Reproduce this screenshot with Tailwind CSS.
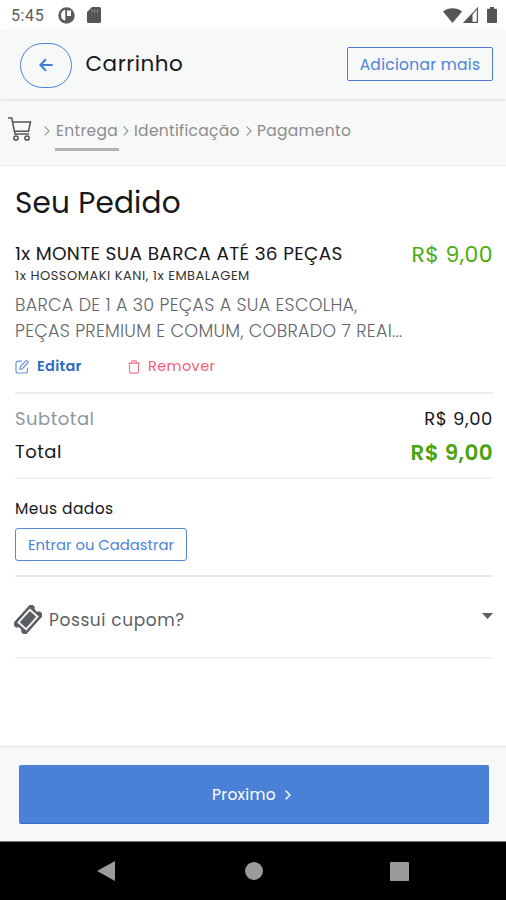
<!DOCTYPE html>
<html lang="pt-BR">
<head>
<meta charset="utf-8">
<meta name="viewport" content="width=device-width, initial-scale=1">
<title>Carrinho</title>
<script src="https://cdn.jsdelivr.net/npm/@tailwindcss/browser@4"></script>
</head>
<body class="bg-white">
<div class="flex h-[900px] w-[506px] flex-col overflow-hidden bg-white font-[Poppins,Inter,sans-serif] text-[#16181b] whitespace-nowrap">

  <!-- Status bar -->
  <div class="flex h-[30px] shrink-0 items-center pl-[11px] pr-[8px] text-[#5c5c5c]">
    <span class="w-[47px] font-[Roboto,sans-serif] text-[16px] leading-[30px] tracking-[0.600px]"><span class="relative top-px">5:45</span></span>
    <svg class="h-[17px] w-[17px]" viewBox="0 0 17 17"><circle cx="8.500" cy="8.500" r="8.200" fill="#5c5c5c"/><path d="M7.300 3v10.500C4.500 13.500 3 11.300 3 8.500S4.500 3 7.300 3zM9 3.500h4v5.600H9z" fill="#fff"/></svg>
    <svg class="ml-[12px] h-[16px] w-[14px]" viewBox="0 0 14 16"><path d="M5 0h7.500A1.500 1.500 0 0 1 14 1.500v13a1.500 1.500 0 0 1-1.500 1.500h-11A1.500 1.500 0 0 1 0 14.500V5z" fill="#555"/><path d="M5 2.500v3M7.700 2.500v3M10.400 2.500v3" stroke="#999" stroke-width="1"/></svg>
    <div class="ml-auto flex items-center">
      <svg class="h-[15px] w-[19px]" viewBox="0 0 19 15"><path d="M0 3.400C5.500-.9 13.500-.9 19 3.400L9.500 15z" fill="#555"/></svg>
      <svg class="ml-[1px] h-[16px] w-[15px]" viewBox="0 0 15 16"><path d="M14.400 1.400V15.400H1.300z" fill="none" stroke="#555" stroke-width="1.200"/><path d="M9.500 6.500V16H0z" fill="#555"/></svg>
      <svg class="ml-[9px] mr-px h-[16px] w-[10px]" viewBox="0 0 10 16"><path d="M3 0h4v1.700h2.200q.8 0 .8.800v12.700q0 .8-.8.800H.8q-.8 0-.8-.8V2.500q0-.8.800-.8H3z" fill="#555"/></svg>
    </div>
  </div>

  <!-- Header -->
  <header class="z-10 flex h-[69px] shrink-0 items-center bg-[#f7f8f8] pl-5 pr-[13px] pb-[1px] shadow-[0_1px_3px_rgba(0,0,0,0.12)]">
    <button class="mt-[2px] flex h-[45px] w-[52px] items-center justify-center rounded-full border border-[#4b82dc]">
      <svg class="h-[14px] w-[14px]" viewBox="0 0 14 14" fill="none" stroke="#3f7cdb" stroke-width="2"><path d="M13.700 7H1.500M7 1.200 1.300 7 7 12.800"/></svg>
    </button>
    <h1 class="ml-[13.500px] text-[21.500px] leading-[30px] tracking-[0.500px]">Carrinho</h1>
    <button class="ml-auto h-[34px] w-[146px] rounded-[2px] border border-[#4b7bd0] pt-px text-[15.500px] tracking-[0.300px] text-[#4b82dc]">Adicionar mais</button>
  </header>

  <!-- Steps -->
  <nav class="flex h-[67px] shrink-0 items-center border-b border-[#e9ecec] bg-[#f7f8f8] pb-[3px] pl-2 text-[15.500px] text-[#8d8d8d]">
    <svg class="-mt-[4px] h-[24px] w-[24px]" viewBox="0 0 24 24" fill="none" stroke="#555" stroke-width="1.500"><path d="M0 1h3.700l3.300 16h14.200M4.700 5h17.800l-2 9.200H6.300"/><circle cx="8" cy="21" r="2.100"/><circle cx="19" cy="21" r="2.100"/></svg>
    <svg class="ml-[12px] h-[10px] w-[6px]" viewBox="0 0 6 10" fill="none" stroke="#999" stroke-width="1.200"><path d="m.7.700 4.300 4.300-4.300 4.300"/></svg>
    <span class="ml-[5px] flex h-[39px] w-[64px] translate-y-px items-center justify-center border-b-[3px] border-[#b4b4b4] pt-[2px] tracking-[0.300px]">Entrega</span>
    <svg class="ml-[4px] h-[10px] w-[6px]" viewBox="0 0 6 10" fill="none" stroke="#999" stroke-width="1.200"><path d="m.7.700 4.300 4.300-4.300 4.300"/></svg>
    <span class="ml-[5px] w-[106px] tracking-[0.300px]">Identificação</span>
    <svg class="ml-[6px] h-[10px] w-[6px]" viewBox="0 0 6 10" fill="none" stroke="#999" stroke-width="1.200"><path d="m.7.700 4.300 4.300-4.300 4.300"/></svg>
    <span class="ml-[5px] tracking-[0.300px]">Pagamento</span>
  </nav>

  <!-- Order -->
  <main class="flex flex-1 flex-col px-[15px] pr-[13px]">
    <h2 class="mt-[17px] text-[29.500px] leading-[40px] tracking-[0.200px]">Seu Pedido</h2>
    <div class="mt-[17px] flex items-center justify-between">
      <span class="text-[18.500px] leading-[26px] tracking-[0.330px]">1x MONTE SUA BARCA ATÉ 36 PEÇAS</span>
      <span class="mt-[3px] text-[22px] leading-[24px] tracking-[0.400px] text-[#4cad10]">R$ 9,00</span>
    </div>
    <p class="mt-px text-[13px] leading-[16px] tracking-[0.520px] text-[#333]">1x HOSSOMAKI KANI, 1x EMBALAGEM</p>
    <p class="mt-[8px] text-[17.500px] leading-[26px] font-light tracking-[0.300px] text-[#5f666d]">BARCA DE 1 A 30 PEÇAS A SUA ESCOLHA,<br>PEÇAS PREMIUM E COMUM, COBRADO 7 REAI...</p>
    <div class="mt-[12px] flex h-[20px] items-center pt-px text-[14.500px]">
      <svg class="h-[14px] w-[14px]" viewBox="0 0 14 14" fill="none" stroke="#6d94d8" stroke-width="1.200"><path d="M7 1.200H3A2 2 0 0 0 1 3.200V11a2 2 0 0 0 2 2h7.500a2 2 0 0 0 2-2V7.500M5 9.300l.5-3L10.800 1q1-.8 1.900.1t0 1.900L7.600 8.500z"/></svg>
      <span class="ml-[8px] w-[91px] font-semibold tracking-[0.300px] text-[#2a6bc6]">Editar</span>
      <svg class="h-[14px] w-[12px]" viewBox="0 0 12 14" fill="none" stroke="#f0788b" stroke-width="1.200"><path d="M.3 3.200h11.400M3.600 3V1.700q0-.8.800-.8h3.200q.8 0 .8.800V3M1.500 3.200v8.300q0 1.700 1.700 1.700h5.600q1.700 0 1.700-1.700V3.200"/></svg>
      <span class="ml-[8px] tracking-[0.400px] text-[#ee6077]">Remover</span>
    </div>
    <hr class="mt-[16px] h-[2px] shrink-0 border-0 bg-[#ebebeb]">
    <div class="mt-[11px] flex h-[26px] items-center justify-between text-[18px]">
      <span class="tracking-[0.500px] text-[#8b989e]">Subtotal</span>
      <span class="tracking-[0.600px]">R$ 9,00</span>
    </div>
    <div class="mt-[7px] flex h-[28px] items-center justify-between">
      <span class="-mt-px text-[18px] tracking-[0.500px]">Total</span>
      <span class="mt-[2px] text-[21.500px] font-semibold tracking-[0.400px] text-[#4ca30f]">R$ 9,00</span>
    </div>
    <hr class="mt-[11px] h-[2px] shrink-0 border-0 bg-[#f1f1f1]">
    <h3 class="mt-[19px] text-[15.500px] leading-[22px] tracking-[0.400px]">Meus dados</h3>
    <button class="mt-[8px] h-[33px] w-[172px] rounded-[3px] border border-[#5b86d2] pt-[2px] text-[14.800px] text-[#4b82dc]">Entrar ou Cadastrar</button>
    <hr class="mt-[14px] h-[2px] shrink-0 border-0 bg-[#ebebeb]">
    <div class="flex h-[80px] items-center pt-[7px] text-[#5b5f63]">
      <svg class="-ml-[1px] -mt-[2px] h-[29px] w-[28px]" viewBox="0 0 28 29"><g transform="translate(14 14.500) rotate(-48)"><path fill="#5b5f63" d="M-14-8.600h28v5.300a3.500 3.500 0 0 0 0 6.600v5.300h-28V3.300a3.500 3.500 0 0 0 0-6.600z"/><path fill="none" stroke="#fff" stroke-width="1.800" d="M-8.500-5.200h17V5.200h-17z"/></g></svg>
      <span class="ml-[7px] text-[17px] tracking-[0.600px]">Possui cupom?</span>
      <svg class="-mt-[9px] ml-auto h-[6px] w-[11px]" viewBox="0 0 11 6"><path d="M0 0h11L5.500 6z" fill="#5b5f63"/></svg>
    </div>
    <hr class="h-[2px] shrink-0 border-0 bg-[#f1f1f1]">
  </main>

  <!-- Footer action -->
  <footer class="h-[95px] shrink-0 border-t border-[#e6e8e8] bg-[#f7f8f8] px-[19px] pr-[17px] pt-[18px]">
    <button class="flex h-[59px] w-full items-center justify-center rounded-[2px] border border-b-[#3a6fc4] border-[#4a80d5] bg-[#4a80d5] pr-[5px] text-[15.500px] text-white">
      <span class="tracking-[0.300px]">Proximo</span>
      <svg class="ml-[9px] h-[10px] w-[6px]" viewBox="0 0 6 10" fill="none" stroke="#fff" stroke-width="1.500"><path d="m.7.700 4.300 4.300-4.300 4.300"/></svg>
    </button>
  </footer>

  <!-- Android navigation -->
  <div class="flex h-[59px] shrink-0 items-center border-t border-[#777] bg-black pl-[97px]">
    <svg class="h-[20px] w-[18px]" viewBox="0 0 18 20"><path d="M18 0v20L0 10z" fill="#9b9b9b"/></svg>
    <span class="ml-[130px] h-[18px] w-[18px] rounded-full bg-[#9b9b9b]"></span>
    <span class="ml-[127px] h-[19px] w-[19px] rounded-[1px] bg-[#9b9b9b]"></span>
  </div>
</div>
</body>
</html>
